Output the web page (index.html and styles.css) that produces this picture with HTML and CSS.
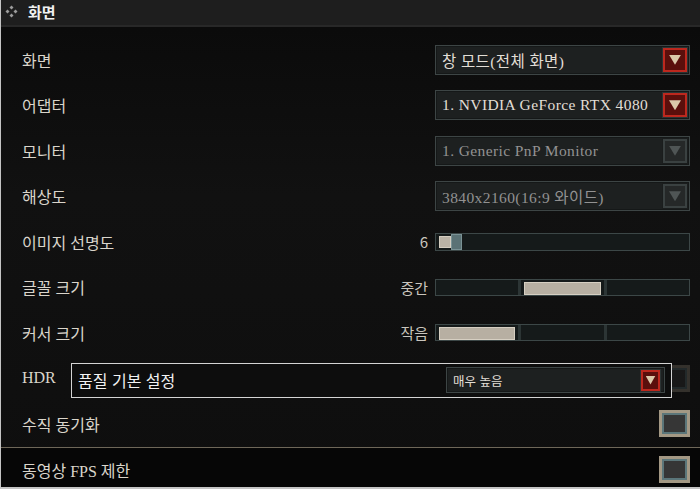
FILE: index.html
```html
<!DOCTYPE html>
<html lang="ko">
  <head>
    <meta charset="UTF-8" />
    <meta name="viewport" content="width=device-width, initial-scale=1.0" />
    <title>화면</title>
    <link rel="stylesheet" href="styles.css">
  </head>
  <body>
    <div class="panel">
      <div class="panel-head">
        <svg class="head-icon" viewBox="0 0 13 13" width="13" height="13">
          <path d="M6.5 0.5l2 2-2 2-2-2z M2.5 4.5l2 2-2 2-2-2z M10.5 4.5l2 2-2 2-2-2z M6.5 8.5l2 2-2 2-2-2z" />
        </svg>
        <span class="head-title">화면</span>
      </div>

      <div class="rows">
        <div class="row">
          <span class="label">화면</span>
          <div class="select">
            <span class="select-text">창 모드(전체 화면)</span>
            <span class="arrow"></span>
          </div>
        </div>

        <div class="row">
          <span class="label">어댑터</span>
          <div class="select">
            <span class="select-text">1. NVIDIA GeForce RTX 4080</span>
            <span class="arrow"></span>
          </div>
        </div>

        <div class="row">
          <span class="label">모니터</span>
          <div class="select disabled">
            <span class="select-text">1. Generic PnP Monitor</span>
            <span class="arrow"></span>
          </div>
        </div>

        <div class="row">
          <span class="label">해상도</span>
          <div class="select disabled">
            <span class="select-text">3840x2160(16:9 와이드)</span>
            <span class="arrow"></span>
          </div>
        </div>

        <div class="row">
          <span class="label">이미지 선명도</span>
          <div class="control">
            <span class="value">6</span>
            <div class="slider">
              <span class="slider-fill"></span>
              <span class="slider-thumb"></span>
            </div>
          </div>
        </div>

        <div class="row">
          <span class="label">글꼴 크기</span>
          <div class="control">
            <span class="value">중간</span>
            <div class="steps">
              <span class="step"></span>
              <span class="step on"></span>
              <span class="step"></span>
            </div>
          </div>
        </div>

        <div class="row">
          <span class="label">커서 크기</span>
          <div class="control">
            <span class="value">작음</span>
            <div class="steps">
              <span class="step on"></span>
              <span class="step"></span>
              <span class="step"></span>
            </div>
          </div>
        </div>

        <div class="row hdr-row">
          <span class="label">HDR</span>
          <span class="check dim"></span>

          <div class="preset">
            <span class="preset-title">품질 기본 설정</span>
            <div class="select small">
              <span class="select-text">매우 높음</span>
              <span class="arrow"></span>
            </div>
          </div>
        </div>

        <div class="row">
          <span class="label">수직 동기화</span>
          <span class="check"></span>
        </div>

        <div class="row last">
          <span class="label">동영상 FPS 제한</span>
          <span class="check"></span>
        </div>
      </div>
    </div>
  </body>
</html>
```

FILE: styles.css
```css
* {
  box-sizing: border-box;
}
body {
  margin: 0;
  background: #0b0b0b;
  font-family: "Liberation Serif", "Noto Sans CJK KR", serif;
  color: #dad5cb;
}
.panel {
  width: 700px;
  height: 489px;
  overflow: hidden;
  border-left: 1px solid #c4c4c4;
  border-bottom: 2px solid #c4c4c4;
  background: linear-gradient(#0a0a0a, #111 40%, #0e0e0e);
}

/* header */
.panel-head {
  height: 27px;
  display: flex;
  align-items: center;
  gap: 10px;
  padding: 0 0 2px 4px;
  background: #1e1e1e;
  border-bottom: 2px solid #282828;
}
.head-icon {
  fill: #9c9c9c;
}
.head-title {
  font-family: "Noto Sans CJK KR", sans-serif;
  font-weight: 700;
  font-size: 15px;
  color: #f1f1f1;
}

/* rows */
.rows {
  padding-top: 10px;
}
.row {
  position: relative;
  height: 45.5px;
  display: flex;
  align-items: center;
  justify-content: space-between;
  padding: 0 10px 0 21px;
}
.label {
  font-size: 16px;
}
.row.last {
  background: #060606;
  border-top: 1px solid #6e6759;
}

/* dropdowns */
.select {
  width: 255px;
  height: 30px;
  display: flex;
  align-items: center;
  justify-content: space-between;
  padding: 0 2px 0 6px;
  background: #1d2020;
  border: 1px solid #3d4545;
  box-shadow: inset 0 0 0 1px #151818;
}
.select-text {
  font-size: 15.5px;
  letter-spacing: 0.4px;
  color: #e2ded6;
  white-space: nowrap;
}
.arrow {
  width: 24px;
  height: 24px;
  display: flex;
  align-items: center;
  justify-content: center;
  background: #5a0f0c;
  border: 2px solid #bd281e;
  box-shadow: 0 0 0 1px #2b3333;
}
.arrow::after {
  content: "";
  width: 12px;
  height: 10px;
  background: #dbc9aa;
  clip-path: polygon(0 0, 100% 0, 50% 100%);
}
.select.disabled .select-text {
  color: #929292;
}
.select.disabled .arrow {
  background: #252828;
  border-color: #3a4141;
  box-shadow: 0 0 0 1px #1a1d1d;
}
.select.disabled .arrow::after {
  background: #4f5555;
}
.select.small {
  width: 219px;
  height: 26px;
  padding-right: 4px;
}
.select.small .select-text {
  font-family: "Noto Sans CJK KR", sans-serif;
  font-size: 12.5px;
  letter-spacing: 0;
}
.select.small .arrow {
  width: 19px;
  height: 21px;
}
.select.small .arrow::after {
  width: 10px;
  height: 9px;
}

/* value controls */
.control {
  display: flex;
  align-items: center;
  gap: 7px;
}
.value {
  font-family: "Noto Sans CJK KR", sans-serif;
  font-size: 15px;
  color: #c9c5bd;
}
.slider {
  width: 255px;
  height: 18px;
  display: flex;
  padding: 2px 3px;
  background: #151a1a;
  border: 1px solid #3c4747;
}
.slider-fill {
  width: 12px;
  background: #bab2a5;
  border: 1px solid #d4cdc0;
}
.slider-thumb {
  width: 11px;
  margin-top: -2px;
  margin-bottom: -2px;
  background: #5b7275;
  border: 1px solid #7a9295;
}
.steps {
  width: 255px;
  height: 17px;
  display: grid;
  grid-template-columns: repeat(3, 1fr);
  gap: 3px;
  background: #2c3535;
  border: 1px solid #3c4747;
}
.step {
  background: #151a1a;
  padding: 2px 3px;
}
.step.on::before {
  content: "";
  display: block;
  height: 100%;
  background: #b7afa2;
  border: 1px solid #d6cfc2;
}

/* checkboxes */
.check {
  width: 31px;
  height: 27px;
  background: #363636;
  border: 3px solid #a39884;
  box-shadow: inset 0 0 0 2px #5b767a;
}
.check.dim {
  opacity: 0.25;
}

/* quality preset overlay */
.preset {
  position: absolute;
  left: 70px;
  right: 28px;
  top: 7px;
  height: 35px;
  display: flex;
  align-items: center;
  justify-content: space-between;
  padding: 0 6px 0 6px;
  background: #0d0d0d;
  border: 1px solid #d4d4d4;
}
.preset-title {
  font-family: "Noto Sans CJK KR", sans-serif;
  font-size: 16px;
  font-weight: 400;
  color: #f2f2f2;
}
```
